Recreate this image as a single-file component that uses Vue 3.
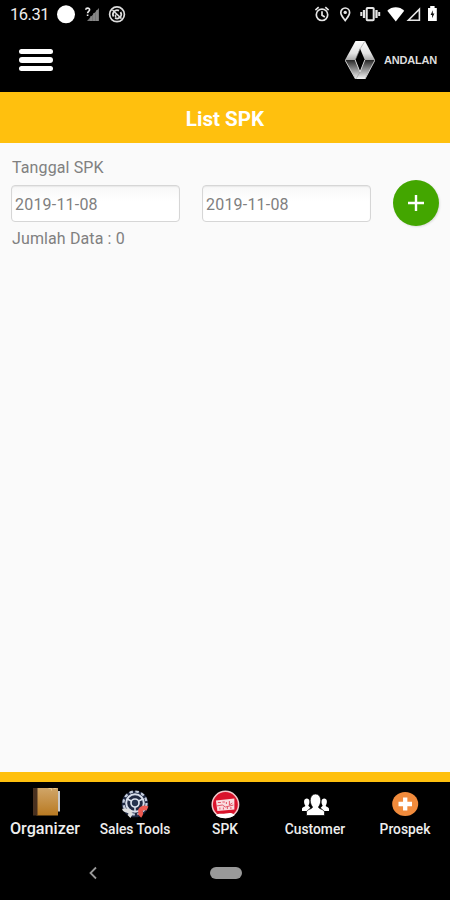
<template>
  <div class="screen">
    <div class="status">
      <span class="time">16.31</span>
      <svg class="status-left" width="72" height="30" viewBox="56 0 72 30">
        <circle cx="66" cy="14.3" r="9" fill="#fff" />
        <path d="M87 21 L99 8 V21 Z" fill="#777" />
        <path d="M91 16v5M94 13v8M97 10v11" stroke="#999" stroke-width="1" />
        <path d="M85.7 9.8c.2-2.3 4-2.2 3.9 0 0 1.5-2 1.6-2 3.4M87.6 14.5v1.6" fill="none" stroke="#eee" stroke-width="1.6" />
        <circle cx="117" cy="14.3" r="7.4" fill="none" stroke="#ddd" stroke-width="1.7" />
        <path d="M113.6 16.6a4.2 4.2 0 0 1 5.4-6M120.5 12a4.2 4.2 0 0 1-5.5 6" fill="none" stroke="#ddd" stroke-width="1.8" />
        <path d="M112.5 10l9 8.6M115.6 14.5v3" fill="none" stroke="#ddd" stroke-width="1.5" />
      </svg>
      <svg class="status-right" width="130" height="30" viewBox="312 0 130 30">
        <g fill="none" stroke="#e6e6e6" stroke-width="1.7">
          <circle cx="322" cy="14.8" r="5.7" />
          <path d="M315.4 10.2l3.3-3M328.6 10.2l-3.3-3M322 11.2v4l2.8 1.8" />
          <path d="M345.2 20.5c-2.4-3.2-4.4-5.4-4.4-8.1a4.4 4.4 0 0 1 8.8 0c0 2.7-2 4.9-4.4 8.1z" />
          <rect x="366.7" y="7.9" width="7" height="12.4" rx=".8" stroke-width="2" />
          <path d="M364 10v8M376.5 10v8" stroke-width="2.3" />
          <path d="M361.3 12v4M379.2 12v4" stroke-width="2" />
          <path d="M419.4 9.2v11h-11z" stroke-width="1.6" />
        </g>
        <circle cx="345.2" cy="12.4" r="1.7" fill="#e6e6e6" />
        <path d="M387.3 10.8c4.7-4.6 12.2-4.6 16.9 0L395.8 21.6z" fill="#fff" />
        <path d="M428 8h2.2V6h4.4v2h2.2v13H428z" fill="#fff" />
        <path d="M432.8 10.2l-2.2 4.8h1.5v3.3l2.3-4.8h-1.6z" fill="#111" />
      </svg>
    </div>

    <header class="header">
      <button class="menu" aria-label="Menu"><i></i><i></i><i></i></button>
      <div class="brand">
        <svg width="30" height="40" viewBox="0 0 30 40">
          <defs>
            <linearGradient id="upper" x1="0" y1="0" x2="0" y2="1">
              <stop offset="0" stop-color="#fff" />
              <stop offset=".65" stop-color="#e2e2e2" />
              <stop offset="1" stop-color="#aaa" />
            </linearGradient>
            <linearGradient id="lower" x1="0" y1="0" x2="0" y2="1">
              <stop offset="0" stop-color="#262626" />
              <stop offset=".45" stop-color="#888" />
              <stop offset="1" stop-color="#f5f5f5" />
            </linearGradient>
          </defs>
          <path d="M10.5 1H20L30 20H0z" fill="url(#upper)" />
          <path d="M0 20H30L20 39H10.5z" fill="url(#lower)" />
          <path d="M0 20L10.500 39M30 20L20 39" stroke="#ccc" stroke-width="1" />
          <path d="M15 8.500L19.800 20L15 32L10.200 20z" fill="#000" />
          <path d="M10.200 20L15 32L19.800 20" fill="none" stroke="#ddd" stroke-width="1" />
          <path d="M20 1L15 9L10.200 20M15 32L11 39" fill="none" stroke="#999" stroke-width=".6" />
        </svg>
        <span>ANDALAN</span>
      </div>
    </header>

    <h1 class="title">List SPK</h1>

    <main class="content">
      <label class="caption">Tanggal SPK</label>
      <div class="filters">
        <input v-model="from" type="text" />
        <input v-model="to" type="text" />
        <button class="add" aria-label="Tambah">
          <svg width="18" height="18" viewBox="0 0 18 18">
            <path d="M9 1v16M1 9h16" stroke="#fff" stroke-width="2.4" />
          </svg>
        </button>
      </div>
      <div class="caption total">Jumlah Data : {{ rows.length }}</div>
    </main>

    <nav class="tabs">
      <div v-for="tab in tabs" :key="tab.id" class="tab" :class="{ active: tab.id === current }" @click="current = tab.id">
        <svg v-if="tab.id === 'organizer'" width="30" height="30" viewBox="29.5 786 30 30">
          <defs>
            <linearGradient id="book" x1="0" y1="0" x2="0" y2="1">
              <stop offset="0" stop-color="#d0a568" />
              <stop offset="1" stop-color="#b97a22" />
            </linearGradient>
          </defs>
          <path d="M57 791h2.500v20.500H57z" fill="#c9c9c9" />
          <path d="M36 788h21.500v27.500H36z" fill="url(#book)" />
          <path d="M32.500 788h4.500v27.500h-4.500z" fill="#48301f" />
          <path d="M48 788.500h3v2M53 788.500h3" stroke="#ecc98c" fill="none" />
        </svg>
        <svg v-else-if="tab.id === 'tools'" width="30" height="30" viewBox="120 789 30 30">
          <circle cx="135" cy="804" r="13.3" fill="#202942" />
          <circle cx="135" cy="803" r="11.5" fill="none" stroke="#c5cddd" stroke-width="2.2" stroke-dasharray="3.5 2.52" />
          <circle cx="135" cy="803" r="8.8" fill="none" stroke="#d8deeb" stroke-width="2" />
          <circle cx="135" cy="803" r="4" fill="#27344f" stroke="#dce3ee" stroke-width="1.7" />
          <path d="M127 799l4.500 2M143 799l-4.500 2M135 807v4" stroke="#dce3ee" stroke-width="1.5" />
          <path d="M124 808.500c1 3.500 6 1 6.500 4 .3 1.500-.5 3-1.500 4" fill="none" stroke="#dedede" stroke-width="4" />
          <path d="M147.500 808.500c-3.500-1.500-7.500 0-7 3 .5 1.500.5 3-1 4.500" fill="none" stroke="#ec5a51" stroke-width="4.6" />
        </svg>
        <svg v-else-if="tab.id === 'spk'" width="30" height="30" viewBox="209.6 789 30 30">
          <circle cx="225" cy="804.5" r="13.2" fill="#d9132b" stroke="#f3c9cc" stroke-width="1.5" />
          <path d="M215.500 800.500l18.500-2v11l-17 1.500z" fill="#f9dcdf" />
          <path d="M217.500 802.500h3M222 802h2.500M226 802v2M229 801v4l3-2M216 806l6-1 3 2 8-2M219.500 807.500v2M223 807.500v2M227 807v2M230.500 807v2" fill="none" stroke="#e0465a" stroke-width=".9" />
          <path d="M215.500 815.500c3-3 5.500-1 9.500-2s7-1 9.500 1.500c-4 4-15 4-19 .5z" fill="#fff" />
        </svg>
        <svg v-else-if="tab.id === 'customer'" width="30" height="30" viewBox="300 789 30 30" fill="#fff">
          <path d="M302 811v-2c0-2 3-2 3.300-3.200-2-3.600-1.500-7.300 1.500-7.300s3.500 3.700 1.500 7.300l2 2-3 3.200z" />
          <path d="M329 811v-2c0-2-3-2-3.300-3.200 2-3.600 1.500-7.300-1.500-7.300s-3.500 3.700-1.500 7.300l-2 2 3 3.200z" />
          <path d="M306.500 815.500v-3c0-3.500 6-3.300 6-5.500-4-5-2.500-13 3-13s7 8 3 13c0 2.200 6 2 6 5.500v3z" stroke="#000" stroke-width=".7" />
        </svg>
        <svg v-else width="30" height="30" viewBox="390 789 30 30">
          <ellipse cx="405.2" cy="804" rx="13" ry="12" fill="#f18b3c" />
          <path d="M405.200 797.500v13M398.500 804h13.500" stroke="#fff" stroke-width="4.3" />
        </svg>
        <span>{{ tab.label }}</span>
      </div>
    </nav>

    <div class="system">
      <svg width="10" height="14" viewBox="0 0 10 14">
        <path d="M8 1.500L2.500 7l5.500 5.500" fill="none" stroke="#999" stroke-width="1.8" />
      </svg>
      <span class="pill"></span>
    </div>
  </div>
</template>

<script setup>
import { ref } from 'vue'

const from = ref('2019-11-08')
const to = ref('2019-11-08')
const rows = ref([])
const current = ref('organizer')

const tabs = [
  { id: 'organizer', label: 'Organizer' },
  { id: 'tools', label: 'Sales Tools' },
  { id: 'spk', label: 'SPK' },
  { id: 'customer', label: 'Customer' },
  { id: 'prospek', label: 'Prospek' },
]
</script>

<style>
body {
  margin: 0;
}
</style>

<style scoped>
.screen {
  display: flex;
  flex-direction: column;
  width: 450px;
  height: 900px;
  overflow: hidden;
  background: #fafafa;
  font-family: Roboto, sans-serif;
}
.screen * {
  box-sizing: border-box;
}
svg {
  display: block;
  flex: none;
}
button {
  border: 0;
  padding: 0;
  cursor: pointer;
}
.status {
  display: flex;
  height: 30px;
  background: #000;
  color: #eee;
}
.time {
  width: 46px;
  margin-left: 10px;
  font-size: 16.5px;
  font-weight: 400;
  line-height: 30px;
  letter-spacing: -0.5px;
}
.status-right {
  margin-left: auto;
  margin-right: 8px;
}
.header {
  display: flex;
  justify-content: space-between;
  align-items: center;
  height: 62px;
  padding: 0 13px 2px 19px;
  background: #000;
}
.menu {
  display: flex;
  flex-direction: column;
  gap: 3.5px;
  width: 34px;
  background: none;
}
.menu i {
  height: 5.3px;
  border-radius: 3px;
  background: #fff;
}
.brand {
  display: flex;
  align-items: center;
  gap: 9px;
  color: #ddd;
  font: bold 11px "Liberation Sans", sans-serif;
}
.brand span {
  width: 53px;
  padding-bottom: 1px;
  white-space: nowrap;
  letter-spacing: -0.2px;
}
.title {
  height: 51px;
  margin: 0;
  background: #ffc00e;
  color: #fff;
  font-size: 20.6px;
  font-weight: 700;
  line-height: 54px;
  text-align: center;
}
.content {
  flex: 1;
  padding: 14px 11px 0;
}
.caption {
  display: block;
  padding-left: 1px;
  color: #808080;
  font-size: 16px;
  line-height: 21px;
  letter-spacing: 0.12px;
}
.filters {
  display: flex;
  align-items: center;
  height: 46px;
  margin-top: 2px;
}
.filters input {
  width: 169px;
  height: 37px;
  margin-right: 22px;
  padding: 2px 3px 0;
  border: 1px solid #d6d6d6;
  border-radius: 4px;
  outline: 0;
  background: linear-gradient(#f7f7f7, #fff 45%);
  box-shadow: inset 0 1px 1px #e8e8e8;
  color: #808080;
  font: 16px Roboto, sans-serif;
  letter-spacing: 0.2px;
}
.add {
  display: flex;
  align-items: center;
  justify-content: center;
  width: 46px;
  height: 46px;
  border-radius: 50%;
  background: #43a600;
  box-shadow: 1px 1px 2px #ddd;
}
.total {
  margin-top: 2px;
}
.tabs {
  display: grid;
  grid-template-columns: repeat(5, 1fr);
  height: 74px;
  border-top: 10px solid #ffc00e;
  background: #000;
}
.tab {
  display: flex;
  flex-direction: column;
  align-items: center;
  padding-top: 7px;
  color: #eee;
  font-size: 13.8px;
  font-weight: 500;
  line-height: 20px;
}
.tab.active {
  padding-top: 4px;
  font-size: 16.2px;
}
.tab.active span {
  margin-top: 3px;
}
.system {
  display: flex;
  align-items: center;
  height: 54px;
  padding-left: 88px;
  background: #000;
}
.pill {
  width: 32px;
  height: 12px;
  margin-left: 112px;
  border-radius: 6px;
  background: #999;
}
</style>
